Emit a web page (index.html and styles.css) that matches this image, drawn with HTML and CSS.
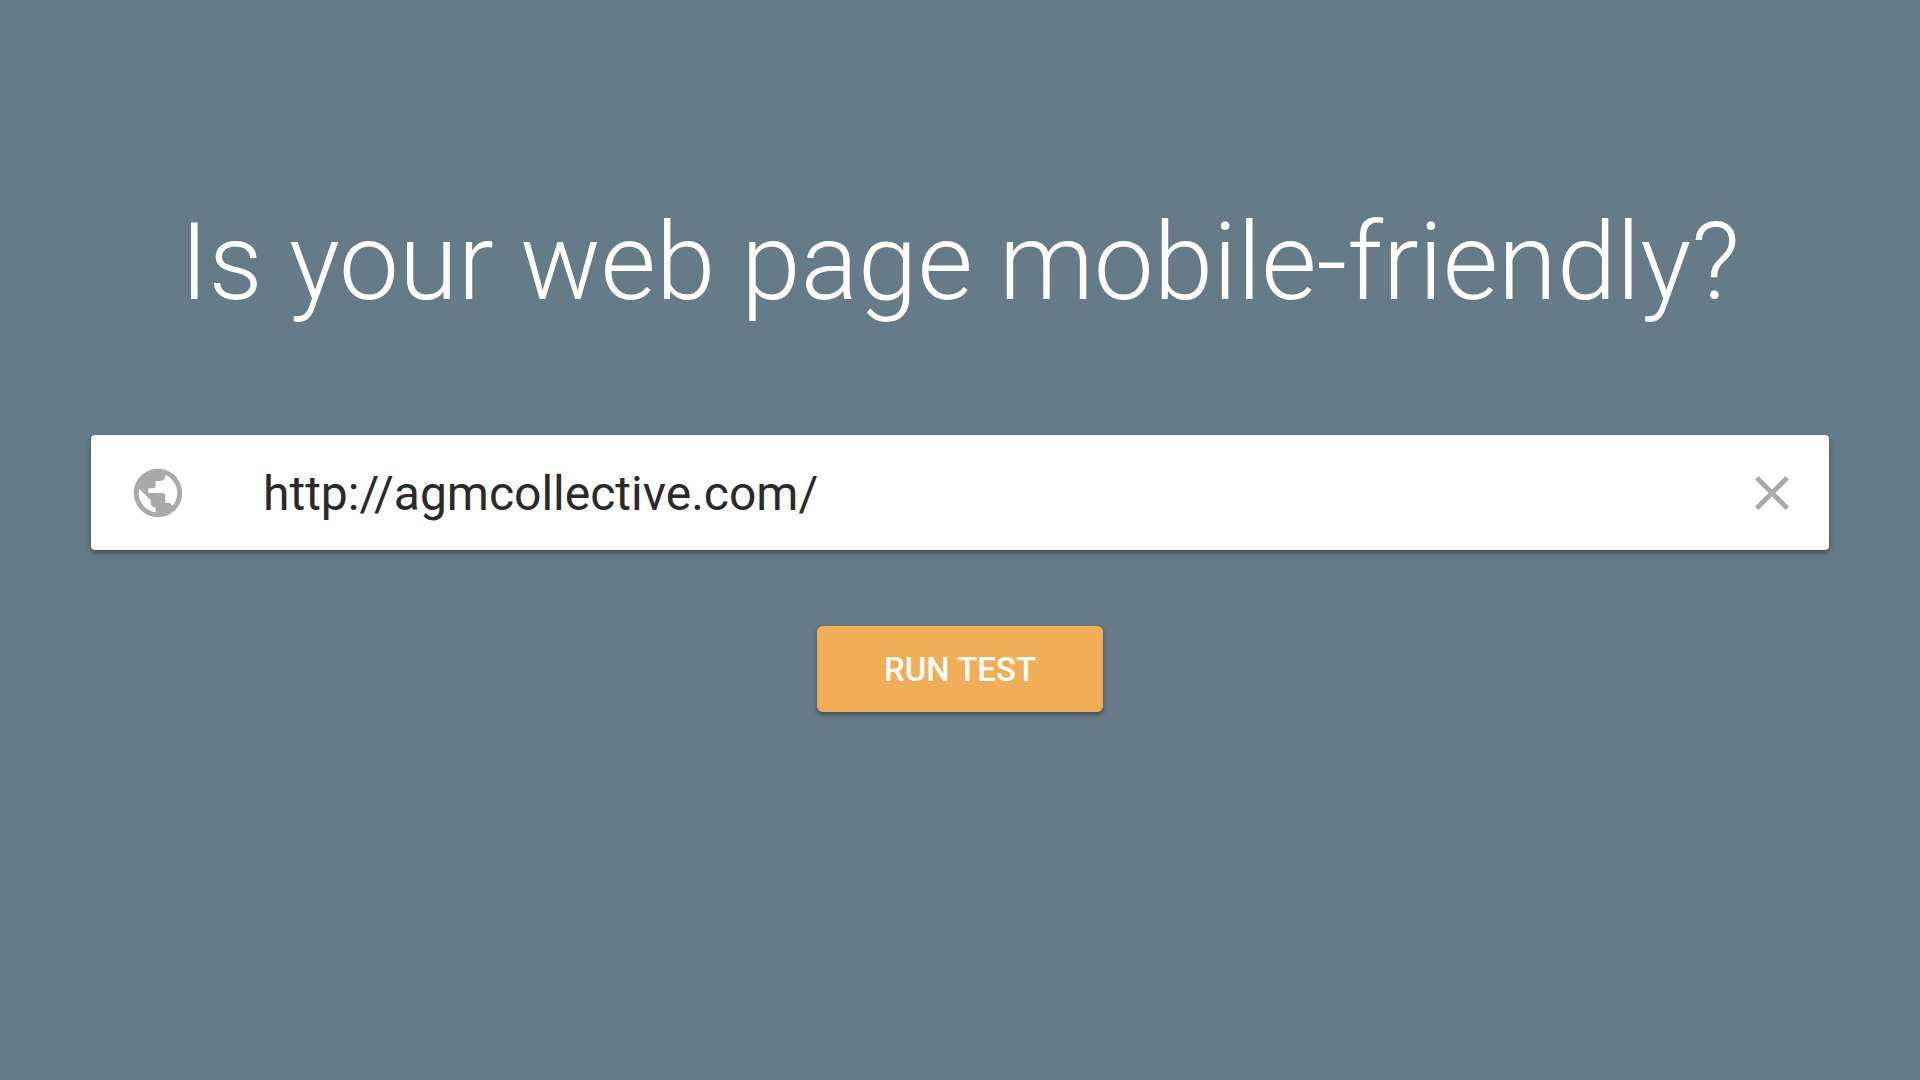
FILE: index.html
```html
<!DOCTYPE html>
<html lang="en">
<head>
<meta charset="utf-8">
<title>Mobile-Friendly Test</title>
<link rel="stylesheet" href="styles.css">
</head>
<body>
<main class="page">
  <h1 class="title">Is your web page mobile-friendly?</h1>
  <form class="test-form">
    <div class="url-field">
      <svg class="globe" viewBox="0 0 24 24" aria-hidden="true"><path d="M12 2C6.48 2 2 6.48 2 12s4.48 10 10 10 10-4.48 10-10S17.52 2 12 2zm-1 17.93c-3.95-.49-7-3.85-7-7.93 0-.62.08-1.21.21-1.79L9 15v1c0 1.1.9 2 2 2v1.93zm6.9-2.54c-.26-.81-1-1.39-1.9-1.39h-1v-3c0-.55-.45-1-1-1H8v-2h2c.55 0 1-.45 1-1V7h2c1.1 0 2-.9 2-2v-.41c2.93 1.19 5 4.06 5 7.41 0 2.08-.8 3.97-2.1 5.39z"/></svg>
      <input class="url-input" type="text" aria-label="Web page URL" value="http://agmcollective.com/" spellcheck="false">
      <button class="clear" type="button" aria-label="Clear"><svg class="clear-icon" viewBox="0 0 24 24" aria-hidden="true"><path d="M19 6.41L17.59 5 12 10.59 6.41 5 5 6.41 10.59 12 5 17.59 6.41 19 12 13.41 17.59 19 19 17.59 13.41 12z"/></svg></button>
    </div>
    <button class="run" type="submit">RUN TEST</button>
  </form>
</main>
</body>
</html>
```
FILE: styles.css
```css
* {
  box-sizing: border-box;
}

body {
  margin: 0;
  min-height: 100vh;
  background: #657b88;
  font-family: Roboto, "Liberation Sans", sans-serif;
}

.page {
  padding: 199px 91px 0;
}

.title {
  margin: 0;
  color: #fff;
  font-size: 107px;
  font-weight: 300;
  line-height: 128px;
  text-align: center;
}

.test-form {
  display: flex;
  flex-direction: column;
  align-items: center;
  gap: 76px;
  margin-top: 108px;
}

.url-field {
  display: flex;
  align-items: center;
  width: 100%;
  height: 115px;
  padding: 0 28px 0 38px;
  background: #fff;
  border-radius: 4px;
  box-shadow: 0 3px 5px rgba(0, 0, 0, 0.35);
}

.globe {
  flex: none;
  width: 58px;
  height: 58px;
  fill: #aaa;
}

.url-input {
  flex: 1;
  min-width: 0;
  height: 66px;
  margin-left: 76px;
  padding: 2px 0 0;
  border: 0;
  outline: 0;
  background: transparent;
  color: #2a2a2a;
  font: 400 48px/64px Roboto, "Liberation Sans", sans-serif;
}

.clear {
  flex: none;
  padding: 0;
  border: 0;
  background: transparent;
  cursor: pointer;
}

.clear-icon {
  display: block;
  width: 58px;
  height: 58px;
  fill: #aaa;
}

.run {
  height: 86px;
  padding: 2px 67px 0;
  border: 0;
  border-radius: 6px;
  background: #f2ae57;
  box-shadow: 0 3px 5px rgba(0, 0, 0, 0.35);
  color: #fff;
  font: 500 33px/40px Roboto, "Liberation Sans", sans-serif;
  cursor: pointer;
}
```
